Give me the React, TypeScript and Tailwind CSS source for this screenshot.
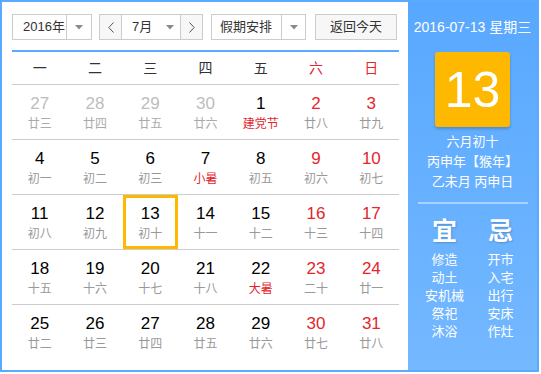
import React from "react";

type Day = { n: number; l: string; kind: "other" | "normal" | "weekend"; fest?: boolean; sel?: boolean };

const rows: Day[][] = [
  [
    { n: 27, l: "廿三", kind: "other" },
    { n: 28, l: "廿四", kind: "other" },
    { n: 29, l: "廿五", kind: "other" },
    { n: 30, l: "廿六", kind: "other" },
    { n: 1, l: "建党节", kind: "normal", fest: true },
    { n: 2, l: "廿八", kind: "weekend" },
    { n: 3, l: "廿九", kind: "weekend" },
  ],
  [
    { n: 4, l: "初一", kind: "normal" },
    { n: 5, l: "初二", kind: "normal" },
    { n: 6, l: "初三", kind: "normal" },
    { n: 7, l: "小暑", kind: "normal", fest: true },
    { n: 8, l: "初五", kind: "normal" },
    { n: 9, l: "初六", kind: "weekend" },
    { n: 10, l: "初七", kind: "weekend" },
  ],
  [
    { n: 11, l: "初八", kind: "normal" },
    { n: 12, l: "初九", kind: "normal" },
    { n: 13, l: "初十", kind: "normal", sel: true },
    { n: 14, l: "十一", kind: "normal" },
    { n: 15, l: "十二", kind: "normal" },
    { n: 16, l: "十三", kind: "weekend" },
    { n: 17, l: "十四", kind: "weekend" },
  ],
  [
    { n: 18, l: "十五", kind: "normal" },
    { n: 19, l: "十六", kind: "normal" },
    { n: 20, l: "十七", kind: "normal" },
    { n: 21, l: "十八", kind: "normal" },
    { n: 22, l: "大暑", kind: "normal", fest: true },
    { n: 23, l: "二十", kind: "weekend" },
    { n: 24, l: "廿一", kind: "weekend" },
  ],
  [
    { n: 25, l: "廿二", kind: "normal" },
    { n: 26, l: "廿三", kind: "normal" },
    { n: 27, l: "廿四", kind: "normal" },
    { n: 28, l: "廿五", kind: "normal" },
    { n: 29, l: "廿六", kind: "normal" },
    { n: 30, l: "廿七", kind: "weekend" },
    { n: 31, l: "廿八", kind: "weekend" },
  ],
];

const Tri = () => (
  <svg width="8" height="5" viewBox="0 0 8 5">
    <polygon points="0,0 8,0 4,4.5" fill="#8a8a8a" />
  </svg>
);

const Chev = ({ dir }: { dir: "l" | "r" }) => (
  <svg width="6" height="11" viewBox="0 0 6 11">
    <polyline
      points={dir === "l" ? "5.5,0.5 0.8,5.5 5.5,10.5" : "0.5,0.5 5.2,5.5 0.5,10.5"}
      fill="none"
      stroke="#555"
      strokeWidth="1"
    />
  </svg>
);

export default function App() {
  const font = { fontFamily: '"Liberation Sans", Arial, "Noto Sans CJK SC", sans-serif' };
  const weekdays = ["一", "二", "三", "四", "五", "六", "日"];
  return (
    <div className="w-[539px] h-[372px] border-2 border-[#5aaaff] flex bg-white" style={font}>
      {/* left */}
      <div className="w-[406px] pl-[10px] pr-[9px] pt-[12px] flex flex-col">
        <div className="flex h-[26px] text-[13px] text-[#333]">
          <div className="w-[80px] h-[26px] border border-[#ccc] flex items-center">
            <div className="flex-1 pl-[10px] leading-[24px]">2016年</div>
            <div className="w-[25px] h-full border-l border-[#ccc] flex items-center justify-center">
              <Tri />
            </div>
          </div>
          <div className="ml-[7px] w-[104px] h-[26px] border border-[#ccc] flex items-center">
            <div className="w-[22px] h-full bg-[#f7f7f7] border-r border-[#ccc] flex items-center justify-center">
              <Chev dir="l" />
            </div>
            <div className="flex-1 pl-[10px] leading-[24px]">7月</div>
            <div className="w-[20px] h-full flex items-center justify-center">
              <Tri />
            </div>
            <div className="w-[22px] h-full bg-[#f7f7f7] border-l border-[#ccc] flex items-center justify-center">
              <Chev dir="r" />
            </div>
          </div>
          <div className="ml-[8px] w-[95px] h-[26px] border border-[#ccc] flex items-center">
            <div className="flex-1 pl-[8px] leading-[24px]">假期安排</div>
            <div className="w-[24px] h-full border-l border-[#ccc] flex items-center justify-center">
              <Tri />
            </div>
          </div>
          <div className="ml-[9px] w-[82px] h-[26px] border border-[#ccc] bg-[#f7f7f7] flex items-center justify-center leading-[24px]">
            返回今天
          </div>
        </div>
        <div className="mt-[10px] h-[2px] bg-[#5aaaff]" />
        <div className="grid grid-cols-7 h-[32px] items-center text-[14px]">
          {weekdays.map((w, i) => (
            <div key={w} className={`text-center ${i >= 5 ? "text-[#e3262c]" : "text-[#333]"}`}>
              {w}
            </div>
          ))}
        </div>
        {rows.map((r, ri) => (
          <div key={ri} className="grid grid-cols-7 h-[55px] border-t border-[#cccccc]">
            {r.map((d, di) => {
              const numColor =
                d.kind === "other" ? "text-[#bdbdbd]" : d.kind === "weekend" ? "text-[#e3262c]" : "text-black";
              const lunColor = d.fest ? "text-[#e3262c]" : d.kind === "other" ? "text-[#aaa]" : "text-[#999]";
              return (
                <div
                  key={di}
                  className={`flex flex-col items-center pt-[9px] ${
                    d.sel ? "shadow-[inset_0_0_0_3px_#ffb800]" : ""
                  }`}
                >
                  <div className={`text-[17px] leading-[20px] ${numColor}`}>{d.n}</div>
                  <div className={`mt-[2px] text-[12px] leading-[16px] ${lunColor}`}>{d.l}</div>
                </div>
              );
            })}
          </div>
        ))}
      </div>
      {/* right */}
      <div className="w-[129px] bg-linear-to-b from-[#58a8ff] to-[#74b8ff] flex flex-col items-center text-white">
        <div className="mt-[15px] h-[20px] leading-[20px] text-[14px] whitespace-nowrap">2016-07-13 星期三</div>
        <div className="mt-[15px] w-[75px] h-[75px] rounded-[3px] bg-[#ffb800] shadow-[0_2px_3px_rgba(0,0,0,0.2)] flex items-center justify-center text-[50px] leading-none">
          13
        </div>
        <div className="mt-[5px] flex flex-col items-center text-[13px] leading-[20px]">
          <div>六月初十</div>
          <div>丙申年【猴年】</div>
          <div>乙未月 丙申日</div>
        </div>
        <div className="mt-[10px] w-[110px] h-[2px] bg-[#a9d3ff]" />
        <div className="mt-[12px] flex w-[112px]">
          {[
            { h: "宜", items: ["修造", "动土", "安机械", "祭祀", "沐浴"] },
            { h: "忌", items: ["开市", "入宅", "出行", "安床", "作灶"] },
          ].map((c) => (
            <div key={c.h} className="w-[56px] flex flex-col items-center">
              <div className="text-[25px] leading-[30px] font-semibold [text-shadow:1px_1px_2px_rgba(0,0,0,0.2)]">
                {c.h}
              </div>
              <div className="mt-[5px] flex flex-col items-center text-[13px] leading-[18px]">
                {c.items.map((t) => (
                  <div key={t} className="whitespace-nowrap">{t}</div>
                ))}
              </div>
            </div>
          ))}
        </div>
      </div>
    </div>
  );
}
